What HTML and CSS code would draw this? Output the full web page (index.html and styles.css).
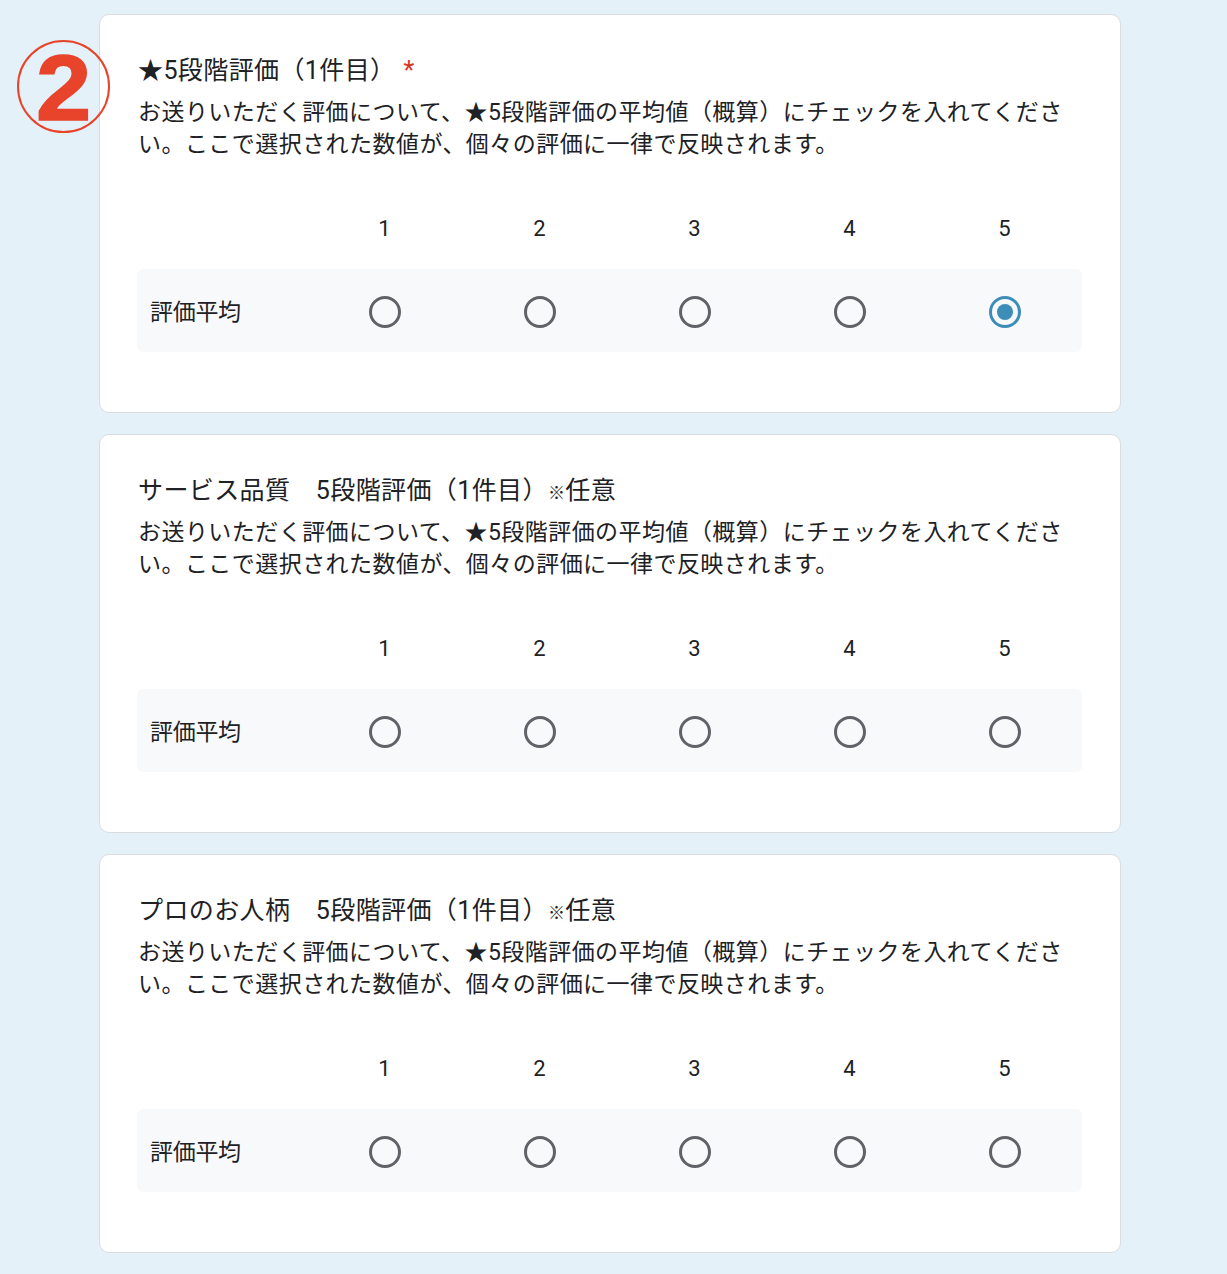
FILE: index.html
```html
<!DOCTYPE html>
<html lang="ja">
<head>
<meta charset="utf-8">
<title>5段階評価</title>
<link rel="stylesheet" href="styles.css">
</head>
<body>
<div class="page">
  <div class="badge"><span class="badge-num">2</span></div>

  <section class="card">
    <div class="q-title">★5段階評価（1件目）<span class="req">*</span></div>
    <div class="q-desc">お送りいただく評価について、★5段階評価の平均値（概算）にチェックを入れてください。ここで選択された数値が、個々の評価に一律で反映されます。</div>
    <div class="grid">
      <div class="head"><span></span><span>1</span><span>2</span><span>3</span><span>4</span><span>5</span></div>
      <div class="row">
        <span class="label">評価平均</span>
        <span class="cell"><span class="radio"></span></span>
        <span class="cell"><span class="radio"></span></span>
        <span class="cell"><span class="radio"></span></span>
        <span class="cell"><span class="radio"></span></span>
        <span class="cell"><span class="radio on"></span></span>
      </div>
    </div>
  </section>

  <section class="card">
    <div class="q-title">サービス品質　5段階評価（1件目）<span class="note">※</span>任意</div>
    <div class="q-desc">お送りいただく評価について、★5段階評価の平均値（概算）にチェックを入れてください。ここで選択された数値が、個々の評価に一律で反映されます。</div>
    <div class="grid">
      <div class="head"><span></span><span>1</span><span>2</span><span>3</span><span>4</span><span>5</span></div>
      <div class="row">
        <span class="label">評価平均</span>
        <span class="cell"><span class="radio"></span></span>
        <span class="cell"><span class="radio"></span></span>
        <span class="cell"><span class="radio"></span></span>
        <span class="cell"><span class="radio"></span></span>
        <span class="cell"><span class="radio"></span></span>
      </div>
    </div>
  </section>

  <section class="card">
    <div class="q-title">プロのお人柄　5段階評価（1件目）<span class="note">※</span>任意</div>
    <div class="q-desc">お送りいただく評価について、★5段階評価の平均値（概算）にチェックを入れてください。ここで選択された数値が、個々の評価に一律で反映されます。</div>
    <div class="grid">
      <div class="head"><span></span><span>1</span><span>2</span><span>3</span><span>4</span><span>5</span></div>
      <div class="row">
        <span class="label">評価平均</span>
        <span class="cell"><span class="radio"></span></span>
        <span class="cell"><span class="radio"></span></span>
        <span class="cell"><span class="radio"></span></span>
        <span class="cell"><span class="radio"></span></span>
        <span class="cell"><span class="radio"></span></span>
      </div>
    </div>
  </section>
</div>
</body>
</html>
```

FILE: styles.css
```css
html, body {
  margin: 0;
  padding: 0;
  background: #e4f1f8;
}
body {
  font-family: Roboto, "Noto Sans CJK JP", sans-serif;
  color: #202124;
}
.page {
  position: relative;
  width: 1022px;
  margin-left: 99px;
  padding-top: 14px;
  padding-bottom: 20px;
  display: flex;
  flex-direction: column;
  gap: 21px;
}
.badge {
  position: absolute;
  left: -82px;
  top: 40px;
  width: 89px;
  height: 89px;
  border: 2.7px solid #e8442b;
  border-radius: 50%;
  display: flex;
  align-items: center;
  justify-content: center;
  z-index: 2;
}
.badge-num {
  font-family: "Liberation Sans", Arial, sans-serif;
  font-weight: 700;
  font-size: 92px;
  line-height: 1;
  color: #e8442b;
  transform: scaleX(1.08);
  margin-top: 2px;
  -webkit-text-stroke: 1.5px #e8442b;
}
.card {
  background: #fff;
  border: 1px solid #dadce0;
  border-radius: 10px;
  padding: 38px 38px 0 37px;
  height: 399px;
  box-sizing: border-box;
  flex: none;
}
.q-title {
  font-size: 25px;
  line-height: 36px;
  height: 36px;
  letter-spacing: 0.4px;
  padding-left: 1px;
  white-space: nowrap;
}
.req {
  color: #d93025;
  margin-left: 8px;
}
.note {
  font-size: 17px;
  line-height: 0;
}
.q-desc {
  margin-top: 8px;
  font-size: 23px;
  line-height: 32px;
  letter-spacing: 0.45px;
  padding-left: 1px;
}
.grid {
  margin-top: 40px;
}
.head, .row {
  display: grid;
  grid-template-columns: 170px repeat(5, 1fr);
  align-items: center;
}
.head {
  height: 54px;
  font-size: 22px;
  text-align: center;
}
.row {
  margin-top: 14px;
  height: 83px;
  background: #f8f9fa;
  border-radius: 6px;
}
.label {
  padding-left: 13px;
  padding-bottom: 2px;
  font-size: 23px;
  letter-spacing: -0.3px;
}
.cell {
  display: flex;
  justify-content: center;
  padding-top: 2px;
}
.radio {
  width: 32px;
  height: 32px;
  box-sizing: border-box;
  border: 3px solid #5f6368;
  border-radius: 50%;
  display: flex;
  align-items: center;
  justify-content: center;
}
.radio.on {
  border-color: #3d8db9;
}
.radio.on::after {
  content: "";
  width: 16px;
  height: 16px;
  border-radius: 50%;
  background: #3d8db9;
}
```
